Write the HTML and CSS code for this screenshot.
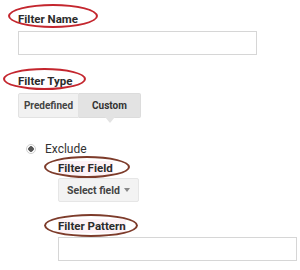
FILE: index.html
```html
<!DOCTYPE html>
<html lang="en">
<head>
    <meta charset="UTF-8">
    <title>Filter</title>
    <link rel="stylesheet" href="styles.css">
</head>
<body>
    <!-- NOME DO FILTRO -->
    <div class="campo campo-nome">
        <span class="rotulo">Filter Name<i class="marca marca-nome"></i></span>
        <input type="text" class="entrada entrada-nome">
    </div>

    <!-- TIPO DO FILTRO -->
    <div class="campo campo-tipo">
        <span class="rotulo">Filter Type<i class="marca marca-tipo"></i></span>
        <div class="segmentos">
            <button class="seg">Predefined</button>
            <button class="seg ativo">Custom</button>
        </div>
    </div>

    <!-- OPÇÕES -->
    <div class="opcao">
        <span class="radio"></span>
        <span>Exclude</span>
    </div>

    <div class="bloco">
        <div class="campo campo-field">
            <span class="rotulo rosa">Filter Field<i class="marca marca-field"></i></span>
            <button class="seletor">Select field <span class="seta"></span></button>
        </div>

        <div class="campo campo-pattern">
            <span class="rotulo rosa">Filter Pattern<i class="marca marca-pattern"></i></span>
            <input type="text" class="entrada entrada-pattern">
        </div>
    </div>
</body>
</html>
```

FILE: styles.css
```css
/* GERAL */
body {
    font-family: Roboto, "Liberation Sans", sans-serif;
    margin: 0;
    padding: 0 0 0 18px;
    background: #fff;
    color: #333;
    font-size: 12px;
}

.rotulo {
    position: relative;
    display: inline-block;
    font-weight: bold;
    font-size: 11.5px;
    line-height: 14px;
    color: #2b2b2b;
}

/* elipses de destaque */
.marca {
    position: absolute;
    border: 2px solid #c4262e;
    border-radius: 50%;
    box-sizing: border-box;
}

.marca-nome { left: -10px; top: -8px; width: 90px; height: 24px; }
.marca-tipo { left: -15px; top: -6px; width: 83px; height: 22px; }
.marca-field { left: -14px; top: -5px; width: 86px; height: 22px; border-color: #7d3b2a; }
.marca-pattern { left: -14px; top: -5px; width: 94px; height: 23px; border-color: #7d3b2a; }

.rosa {
    background: #fdf2f6;
}

/* CAMPOS */
.campo-nome { padding-top: 12px; }
.campo-tipo { padding-top: 19px; }

.entrada {
    display: block;
    box-sizing: border-box;
    height: 24px;
    border: 1px solid #d6d6d6;
    background: #fff;
    margin: 5px 0 0 0;
    padding: 0;
}

.entrada-nome { width: 239px; }
.entrada-pattern { width: 239px; margin-top: 4px; }

/* BOTÕES SEGMENTADOS */
.segmentos {
    display: flex;
    margin-top: 5px;
}

.seg {
    position: relative;
    height: 25px;
    width: 61px;
    padding: 0;
    font-family: inherit;
    font-size: 10px;
    font-weight: bold;
    color: #444;
    background: #f1f1f1;
    border: 1px solid #e2e2e2;
    border-radius: 2px 0 0 2px;
}

.seg.ativo {
    width: 62px;
    background: #e3e3e3;
    border-color: #dcdcdc;
    border-left: none;
    border-radius: 0 2px 2px 0;
    color: #333;
}

.seg.ativo::after {
    content: "";
    position: absolute;
    left: 26px;
    bottom: -6px;
    border-left: 5px solid transparent;
    border-right: 5px solid transparent;
    border-top: 6px solid #e3e3e3;
}

/* RADIO */
.opcao {
    display: flex;
    align-items: center;
    gap: 9px;
    margin: 24px 0 0 8px;
    font-size: 12px;
    color: #333;
}

.radio {
    width: 8px;
    height: 8px;
    border: 1px solid #cfcfcf;
    border-radius: 50%;
    background: radial-gradient(circle, #555 0 2.5px, #fff 3px);
}

/* BLOCO INDENTADO */
.bloco {
    padding-left: 40px;
}

.campo-field { padding-top: 5px; }
.campo-pattern { padding-top: 17px; }

.seletor {
    display: flex;
    align-items: center;
    justify-content: space-between;
    white-space: nowrap;
    margin-top: 3px;
    height: 24px;
    width: 81px;
    padding: 0 8px 0 8px;
    font-family: inherit;
    font-size: 10.5px;
    font-weight: bold;
    color: #444;
    background: #f3f3f3;
    border: 1px solid #e6e6e6;
    border-radius: 2px;
}

.seta {
    border-left: 3px solid transparent;
    border-right: 3px solid transparent;
    border-top: 4px solid #888;
}
```
